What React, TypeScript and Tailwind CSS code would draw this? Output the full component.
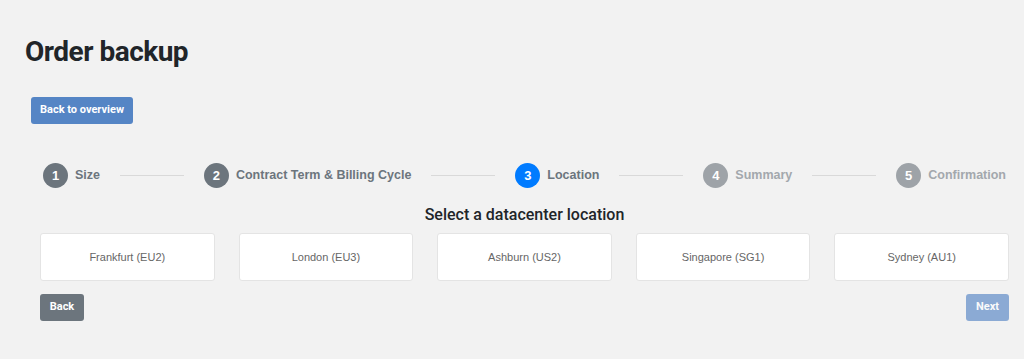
import React from 'react';

type Step = { n: number; label: string; state: 'done' | 'active' | 'todo' };

const steps: Step[] = [
  { n: 1, label: 'Size', state: 'done' },
  { n: 2, label: 'Contract Term & Billing Cycle', state: 'done' },
  { n: 3, label: 'Location', state: 'active' },
  { n: 4, label: 'Summary', state: 'todo' },
  { n: 5, label: 'Confirmation', state: 'todo' },
];

const locations = ['Frankfurt (EU2)', 'London (EU3)', 'Ashburn (US2)', 'Singapore (SG1)', 'Sydney (AU1)'];

const StepItem: React.FC<{ step: Step }> = ({ step }) => {
  const circle =
    step.state === 'active' ? 'bg-[#007bff]' : step.state === 'done' ? 'bg-[#6c757d]' : 'bg-[#9ea3a8]';
  const text = step.state === 'todo' ? 'text-[#a3a8ad]' : 'text-[#6c757d]';
  return (
    <div className="flex items-center gap-[7px] shrink-0">
      <span
        className={`w-[25px] h-[25px] rounded-full ${circle} text-white text-[13px] font-bold flex items-center justify-center`}
      >
        {step.n}
      </span>
      <span className={`${text} text-[12.5px] font-bold`}>{step.label}</span>
    </div>
  );
};

const App: React.FC = () => {
  return (
    <div className="min-h-screen bg-[#f2f2f2] pt-[36px] font-['Liberation_Sans',Arial,sans-serif]">
      <h1 className="pl-[25px] text-[28px] leading-[32px] tracking-[-0.5px] font-bold text-[#212529] font-['Roboto',sans-serif]">
        Order backup
      </h1>
      <button
        type="button"
        className="mt-[29px] ml-[31px] h-[27px] w-[102px] rounded-[3px] bg-[#5585c5] text-white text-[11px] font-bold font-['Roboto',sans-serif]"
      >
        Back to overview
      </button>

      <div className="ml-10 w-[969px]">
        <div className="mt-[39px] h-[25px] px-[3px] flex items-center">
          {steps.map((s, i) => (
            <React.Fragment key={s.n}>
              <StepItem step={s} />
              {i < steps.length - 1 && <div className="flex-1 h-px bg-[#d9d9d9] mx-[20px]" />}
            </React.Fragment>
          ))}
        </div>

        <h2 className="mt-[17px] text-center text-[16px] leading-[20px] font-medium text-[#212529] font-['Roboto',sans-serif]">
          Select a datacenter location
        </h2>

        <div className="mt-2 grid grid-cols-5 gap-6">
          {locations.map((loc) => (
            <div
              key={loc}
              className="h-[48px] bg-white border border-[#e4e4e4] rounded-[3px] flex items-center justify-center text-[11px] text-[#666]"
            >
              {loc}
            </div>
          ))}
        </div>

        <div className="mt-[13px] flex justify-between">
          <button
            type="button"
            className="h-[27px] w-[44px] rounded-[3px] bg-[#6c757d] text-white text-[11px] font-bold font-['Roboto',sans-serif]"
          >
            Back
          </button>
          <button
            type="button"
            disabled
            className="h-[27px] w-[43px] rounded-[3px] bg-[#5585c5] opacity-65 text-white text-[11px] font-bold font-['Roboto',sans-serif]"
          >
            Next
          </button>
        </div>
      </div>
    </div>
  );
};

export default App;
